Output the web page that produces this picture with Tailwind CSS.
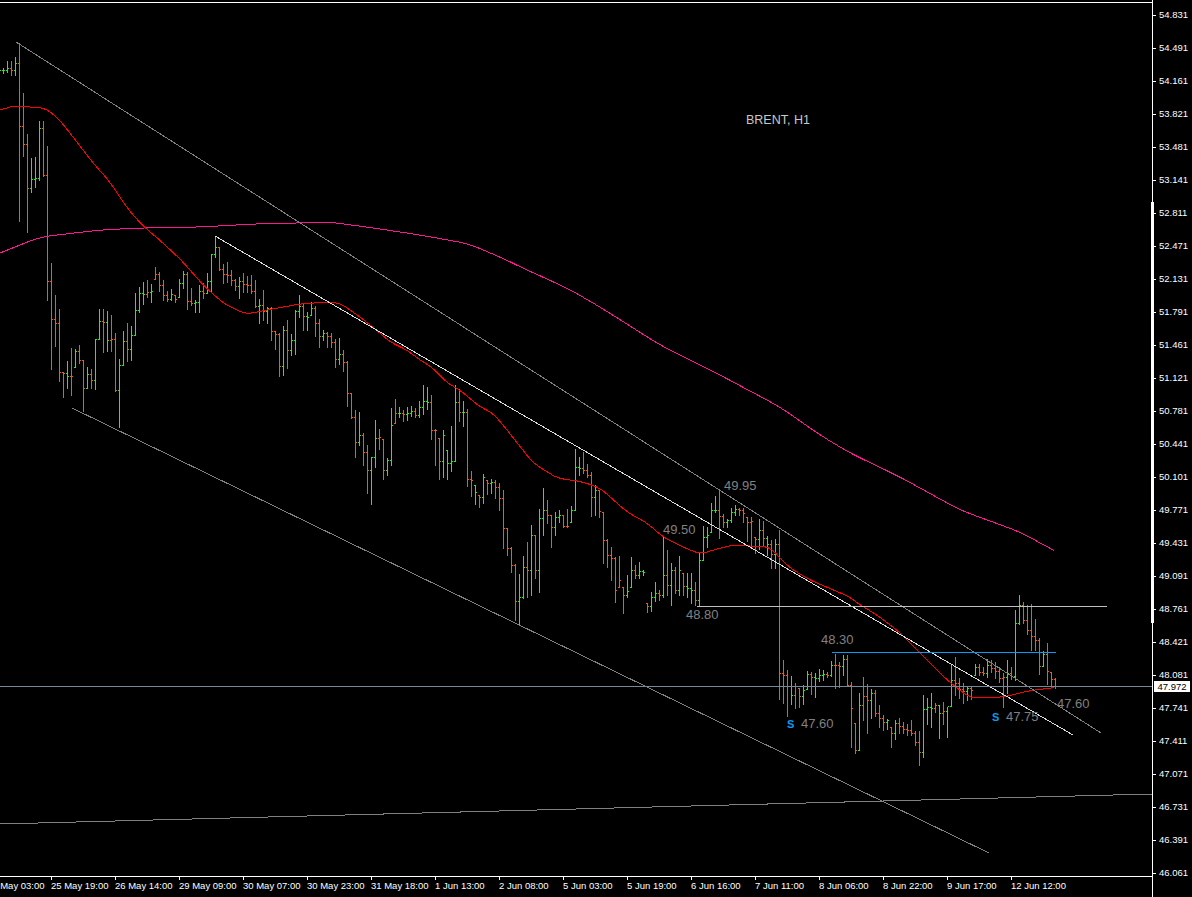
<!DOCTYPE html>
<html lang="en">

<head>
    <meta charset="UTF-8">
    <title>BRENT, H1</title>
    <script src="https://cdn.jsdelivr.net/npm/@tailwindcss/browser@4"></script>
</head>

<body class="bg-black">
    <div class="relative flex w-[1192px] h-[897px] overflow-hidden bg-black text-white font-['Liberation_Sans',sans-serif]">

        <!-- chart + time axis -->
        <div class="flex flex-col w-[1152px] pt-[2px]">
            <div class="relative w-[1152px] h-[875px] border-t border-b border-white">
                <svg id="chart" width="1152" height="873" viewBox="0 3 1152 873" class="block"></svg>

                <span class="absolute left-[746px] top-[110px] text-[12.5px] leading-[14px] text-[#c8c8c8]">BRENT, H1</span>
                <span class="absolute left-[724px] top-[475px] text-[13px] leading-[16px] text-[#808080]">49.95</span>
                <span class="absolute left-[663px] top-[519px] text-[13px] leading-[16px] text-[#808080]">49.50</span>
                <span class="absolute left-[686px] top-[604px] text-[13px] leading-[16px] text-[#808080]">48.80</span>
                <span class="absolute left-[821px] top-[629px] text-[13px] leading-[16px] text-[#808080]">48.30</span>
                <span class="absolute left-[787px] top-[713px] text-[11px] leading-[16px] font-bold text-[#0a9bf0]">S</span>
                <span class="absolute left-[801px] top-[713px] text-[13px] leading-[16px] text-[#808080]">47.60</span>
                <span class="absolute left-[992px] top-[706px] text-[11px] leading-[16px] font-bold text-[#0a9bf0]">S</span>
                <span class="absolute left-[1006px] top-[706px] text-[13px] leading-[16px] text-[#808080]">47.75</span>
                <span class="absolute left-[1057px] top-[693px] text-[13px] leading-[16px] text-[#808080]">47.60</span>
            </div>

            <div class="flex -ml-[13px] text-[9.5px] leading-[11px] whitespace-nowrap">
                <div class="w-[64px]"><div class="w-px h-[3px] bg-white"></div><span>25 May 03:00</span></div>
                <div class="w-[64px]"><div class="w-px h-[3px] bg-white"></div><span>25 May 19:00</span></div>
                <div class="w-[64px]"><div class="w-px h-[3px] bg-white"></div><span>26 May 14:00</span></div>
                <div class="w-[64px]"><div class="w-px h-[3px] bg-white"></div><span>29 May 09:00</span></div>
                <div class="w-[64px]"><div class="w-px h-[3px] bg-white"></div><span>30 May 07:00</span></div>
                <div class="w-[64px]"><div class="w-px h-[3px] bg-white"></div><span>30 May 23:00</span></div>
                <div class="w-[64px]"><div class="w-px h-[3px] bg-white"></div><span>31 May 18:00</span></div>
                <div class="w-[64px]"><div class="w-px h-[3px] bg-white"></div><span>1 Jun 13:00</span></div>
                <div class="w-[64px]"><div class="w-px h-[3px] bg-white"></div><span>2 Jun 08:00</span></div>
                <div class="w-[64px]"><div class="w-px h-[3px] bg-white"></div><span>5 Jun 03:00</span></div>
                <div class="w-[64px]"><div class="w-px h-[3px] bg-white"></div><span>5 Jun 19:00</span></div>
                <div class="w-[64px]"><div class="w-px h-[3px] bg-white"></div><span>6 Jun 16:00</span></div>
                <div class="w-[64px]"><div class="w-px h-[3px] bg-white"></div><span>7 Jun 11:00</span></div>
                <div class="w-[64px]"><div class="w-px h-[3px] bg-white"></div><span>8 Jun 06:00</span></div>
                <div class="w-[64px]"><div class="w-px h-[3px] bg-white"></div><span>8 Jun 22:00</span></div>
                <div class="w-[64px]"><div class="w-px h-[3px] bg-white"></div><span>9 Jun 17:00</span></div>
                <div class="w-[64px]"><div class="w-px h-[3px] bg-white"></div><span>12 Jun 12:00</span></div>
            </div>
        </div>

        <!-- price axis -->
        <div class="w-[40px] h-[897px] border-l border-white text-[9.5px]">
            <div class="flex flex-col -mt-px">
                <div class="flex items-center h-[33px] gap-[3px]"><div class="w-[3px] h-px bg-white"></div><span>54.831</span></div>
                <div class="flex items-center h-[33px] gap-[3px]"><div class="w-[3px] h-px bg-white"></div><span>54.491</span></div>
                <div class="flex items-center h-[33px] gap-[3px]"><div class="w-[3px] h-px bg-white"></div><span>54.161</span></div>
                <div class="flex items-center h-[33px] gap-[3px]"><div class="w-[3px] h-px bg-white"></div><span>53.821</span></div>
                <div class="flex items-center h-[33px] gap-[3px]"><div class="w-[3px] h-px bg-white"></div><span>53.481</span></div>
                <div class="flex items-center h-[33px] gap-[3px]"><div class="w-[3px] h-px bg-white"></div><span>53.141</span></div>
                <div class="flex items-center h-[33px] gap-[3px]"><div class="w-[3px] h-px bg-white"></div><span>52.811</span></div>
                <div class="flex items-center h-[33px] gap-[3px]"><div class="w-[3px] h-px bg-white"></div><span>52.471</span></div>
                <div class="flex items-center h-[33px] gap-[3px]"><div class="w-[3px] h-px bg-white"></div><span>52.131</span></div>
                <div class="flex items-center h-[33px] gap-[3px]"><div class="w-[3px] h-px bg-white"></div><span>51.791</span></div>
                <div class="flex items-center h-[33px] gap-[3px]"><div class="w-[3px] h-px bg-white"></div><span>51.461</span></div>
                <div class="flex items-center h-[33px] gap-[3px]"><div class="w-[3px] h-px bg-white"></div><span>51.121</span></div>
                <div class="flex items-center h-[33px] gap-[3px]"><div class="w-[3px] h-px bg-white"></div><span>50.781</span></div>
                <div class="flex items-center h-[33px] gap-[3px]"><div class="w-[3px] h-px bg-white"></div><span>50.441</span></div>
                <div class="flex items-center h-[33px] gap-[3px]"><div class="w-[3px] h-px bg-white"></div><span>50.101</span></div>
                <div class="flex items-center h-[33px] gap-[3px]"><div class="w-[3px] h-px bg-white"></div><span>49.771</span></div>
                <div class="flex items-center h-[33px] gap-[3px]"><div class="w-[3px] h-px bg-white"></div><span>49.431</span></div>
                <div class="flex items-center h-[33px] gap-[3px]"><div class="w-[3px] h-px bg-white"></div><span>49.091</span></div>
                <div class="flex items-center h-[33px] gap-[3px]"><div class="w-[3px] h-px bg-white"></div><span>48.761</span></div>
                <div class="flex items-center h-[33px] gap-[3px]"><div class="w-[3px] h-px bg-white"></div><span>48.421</span></div>
                <div class="flex items-center h-[33px] gap-[3px]"><div class="w-[3px] h-px bg-white"></div><span>48.081</span></div>
                <div class="flex items-center h-[33px] gap-[3px]"><div class="w-[3px] h-px bg-white"></div><span>47.741</span></div>
                <div class="flex items-center h-[33px] gap-[3px]"><div class="w-[3px] h-px bg-white"></div><span>47.411</span></div>
                <div class="flex items-center h-[33px] gap-[3px]"><div class="w-[3px] h-px bg-white"></div><span>47.071</span></div>
                <div class="flex items-center h-[33px] gap-[3px]"><div class="w-[3px] h-px bg-white"></div><span>46.731</span></div>
                <div class="flex items-center h-[33px] gap-[3px]"><div class="w-[3px] h-px bg-white"></div><span>46.391</span></div>
                <div class="flex items-center h-[33px] gap-[3px]"><div class="w-[3px] h-px bg-white"></div><span>46.061</span></div>
            </div>
        </div>

        <!-- scrollbar mark and current price tag sit over the axis -->
        <div class="absolute left-[1151px] top-[202px] w-[3px] h-[421px] bg-white"></div>
        <div class="absolute left-[1154px] top-[681px] w-[36px] h-[11px] bg-white text-black text-[9.5px] leading-[11px] text-center">47.972</div>
    </div>

    <script>
        // bars: [green?, high y, low y, close y] in chart pixels, one bar every 4px
        const G = 1, O = 0;
        const bars = [
            [G, 70, 72], [G, 68, 73], [G, 61, 72, 68], [O, 61, 75, 70], [G, 57, 75, 63], [O, 43, 221, 126], [O, 93, 156, 144], [O, 134, 232, 188],
            [G, 158, 192, 179], [G, 157, 187, 178], [G, 121, 180, 128], [O, 121, 176, 175], [O, 146, 300, 281], [O, 263, 369, 319], [O, 295, 346, 323], [O, 309, 381, 372],
            [O, 372, 397, 373], [G, 361, 388, 376], [O, 348, 395, 376], [G, 349, 367, 351], [O, 345, 363, 360], [O, 360, 411, 388], [G, 367, 388, 374], [O, 369, 388, 380],
            [G, 339, 389, 339], [G, 309, 339, 321], [O, 309, 352, 322], [G, 311, 351, 340], [O, 315, 351, 339], [O, 333, 391, 390], [G, 359, 427, 365], [G, 331, 365, 341],
            [O, 323, 361, 349], [G, 326, 360, 335], [G, 293, 335, 310], [G, 287, 312, 293], [G, 282, 304, 294], [O, 280, 297, 292], [G, 284, 302, 291], [O, 267, 279, 274],
            [O, 272, 291, 285], [O, 280, 300, 295], [O, 291, 301, 299], [G, 289, 300, 294], [O, 295, 302, 299], [G, 279, 297, 283], [G, 271, 288, 274], [O, 272, 309, 301],
            [O, 288, 305, 303], [G, 300, 312, 302], [G, 285, 312, 291], [O, 283, 298, 293], [G, 273, 293, 281], [G, 254, 292, 254], [G, 237, 257, 247], [O, 247, 270, 269],
            [O, 264, 283, 274], [O, 262, 282, 275], [O, 270, 285, 280], [O, 279, 290, 286], [G, 277, 298, 281], [O, 273, 292, 284], [O, 276, 292, 285], [O, 275, 293, 291],
            [O, 280, 307, 306], [G, 299, 323, 305], [O, 290, 320, 311], [G, 307, 323, 308], [O, 307, 340, 331], [O, 331, 349, 334], [O, 333, 376, 366], [G, 326, 375, 330],
            [O, 320, 368, 350], [G, 334, 355, 340], [G, 310, 354, 311], [G, 295, 317, 306],
            [O, 304, 330, 316], [G, 312, 330, 317], [G, 302, 315, 308], [O, 306, 336, 323], [O, 319, 347, 336], [G, 330, 340, 333], [O, 332, 347, 336], [O, 333, 347, 342],
            [O, 339, 367, 359], [G, 338, 364, 354], [O, 350, 371, 362], [O, 361, 406, 393], [O, 393, 418, 417], [O, 410, 457, 442], [G, 412, 445, 435], [O, 433, 465, 452],
            [O, 445, 493, 470], [G, 457, 504, 457], [G, 420, 467, 438], [O, 429, 449, 437], [O, 439, 479, 470], [G, 458, 475, 460], [G, 408, 465, 425], [O, 399, 423, 413],
            [G, 407, 417, 413], [O, 410, 421, 414], [G, 407, 420, 413], [G, 406, 416, 411], [O, 408, 417, 415], [G, 401, 417, 407], [G, 385, 414, 401], [G, 387, 409, 402],
            [O, 395, 439, 430], [O, 429, 465, 430], [O, 438, 479, 461], [G, 430, 477, 435], [G, 450, 479, 463], [G, 426, 471, 461], [G, 385, 461, 402], [O, 389, 421, 412],
            [G, 401, 426, 412], [O, 409, 486, 479], [O, 471, 496, 480], [G, 485, 504, 492], [O, 495, 507, 497], [G, 474, 503, 477], [O, 480, 494, 483], [G, 479, 493, 482],
            [O, 480, 498, 487], [O, 483, 510, 498], [O, 490, 548, 528], [O, 528, 555, 548], [O, 547, 572, 565], [O, 564, 620, 601], [G, 574, 625, 597], [G, 556, 598, 567],
            [O, 542, 597, 570], [G, 525, 595, 535], [O, 535, 578, 570], [G, 509, 592, 518], [G, 488, 535, 510], [O, 500, 523, 515], [O, 515, 547, 527], [G, 512, 535, 517],
            [G, 510, 522, 515], [O, 515, 527, 526], [O, 509, 527, 526], [G, 506, 522, 510], [G, 449, 510, 467], [G, 457, 475, 468], [O, 452, 473, 470], [O, 464, 477, 475],
            [O, 472, 516, 497], [G, 485, 515, 490], [O, 490, 517, 511], [O, 512, 563, 540], [O, 539, 567, 555], [O, 547, 580, 558], [O, 557, 602, 590], [O, 556, 587, 580],
            [O, 587, 613, 595], [G, 575, 597, 591], [G, 557, 587, 570], [O, 565, 578, 575], [G, 562, 578, 571], [G, 570, 575, 572], [O, 603, 612, 606], [G, 592, 611, 597],
            [G, 582, 601, 593], [O, 590, 600, 595], [G, 536, 597, 575], [O, 550, 595, 585], [G, 563, 605, 570], [O, 567, 593, 590], [G, 556, 595, 570], [O, 573, 595, 586],
            [G, 573, 597, 588], [G, 573, 603, 590], [O, 582, 605, 600], [G, 552, 605, 560], [G, 526, 560, 537], [G, 527, 547, 535], [G, 503, 532, 510], [G, 496, 512, 510],
            [O, 490, 538, 516], [O, 514, 527, 522], [G, 519, 527, 520], [G, 508, 522, 512], [G, 505, 515, 509], [O, 508, 515, 510], [O, 508, 522, 513], [O, 517, 541, 522],
            [O, 517, 545, 521], [O, 537, 553, 539], [G, 519, 549, 530], [O, 521, 545, 538], [G, 536, 555, 544], [O, 540, 568, 554], [G, 539, 568, 544], [O, 530, 699, 673],
            [O, 660, 703, 675], [O, 670, 716, 686], [G, 676, 704, 695], [O, 683, 708, 686], [O, 688, 707, 696], [G, 685, 704, 690], [G, 671, 689, 674], [O, 672, 694, 677],
            [G, 673, 697, 678], [G, 669, 681, 675], [G, 670, 680, 674], [O, 672, 677, 675], [G, 661, 676, 665], [O, 654, 688, 665], [O, 662, 687, 666], [G, 655, 675, 659],
            [O, 655, 686, 685], [O, 682, 747, 708], [O, 723, 753, 750], [G, 693, 750, 705], [O, 677, 720, 696], [O, 684, 733, 700], [G, 689, 718, 693], [O, 690, 716, 713],
            [O, 705, 727, 718], [O, 715, 730, 722], [G, 719, 729, 720], [O, 727, 747, 733], [G, 720, 739, 723], [O, 718, 733, 726], [O, 722, 733, 729], [O, 724, 735, 730],
            [O, 720, 735, 733], [O, 731, 745, 742], [O, 731, 765, 752], [G, 695, 757, 709], [G, 698, 724, 707], [G, 693, 727, 708], [O, 703, 712, 705], [G, 705, 738, 713],
            [O, 702, 724, 711], [G, 707, 737, 706], [G, 664, 706, 680], [O, 657, 695, 683], [O, 678, 698, 689], [O, 683, 703, 691], [G, 687, 700, 688], [O, 687, 699, 690],
            [G, 664, 675, 667], [O, 664, 675, 672], [O, 667, 675, 673], [G, 659, 677, 665], [O, 660, 672, 668], [O, 662, 678, 671], [O, 667, 682, 678], [O, 673, 707, 677],
            [G, 660, 693, 673], [O, 667, 679, 676], [G, 610, 680, 623], [G, 595, 624, 605], [O, 602, 623, 620], [O, 605, 634, 630], [O, 604, 650, 636], [O, 619, 650, 640],
            [O, 638, 674, 666], [G, 651, 666, 654], [O, 643, 684, 671], [O, 672, 687, 679], [O, 678, 688, 686]
        ];

        const ma50 = [0,110, 13,106, 25,106, 35,108, 43,107, 57,117, 70,133, 93,163, 110,182, 127,208, 142,225, 163,243, 183,262, 203,285, 223,303, 245,314, 257,312, 283,307, 300,304, 327,302, 340,303, 360,317, 380,333, 390,342, 407,350, 417,358, 433,368, 447,383, 460,390, 480,407, 493,413, 507,430, 533,463, 557,478, 583,482, 600,488, 627,512, 647,523, 663,537, 683,547, 700,554, 717,549, 733,545, 750,546, 770,547, 778,556, 790,568, 810,580, 850,597, 857,603, 877,615, 897,630, 917,650, 947,680, 970,698, 1003,697, 1033,690, 1053,688, 1055,686];
        const ma200 = [0,253, 40,237, 100,230, 140,228, 200,227, 253,224, 297,223, 330,222, 380,229, 420,235, 470,244, 483,250, 500,257, 527,270, 567,288, 600,307, 660,345, 720,375, 780,407, 820,435, 850,453, 900,477, 960,510, 1020,532, 1055,551];

        // resample every 2px and take a short average so the curves don't kink at the read-off points
        function smooth(p, win) {
            const ys = [];
            for (let x = p[0], k = 0; x <= p[p.length - 2]; x += 2) {
                while (p[k + 2] < x) k += 2;
                ys.push(p[k + 1] + (p[k + 3] - p[k + 1]) * (x - p[k]) / (p[k + 2] - p[k]));
            }
            return ys.map((_, i) => {
                const w = Math.min(win, i, ys.length - 1 - i);
                let sum = 0;
                for (let j = i - w; j <= i + w; j++) sum += ys[j];
                return `${p[0] + i * 2},${(sum / (2 * w + 1)).toFixed(1)}`;
            }).join(" ");
        }

        let green = "", orange = "";
        let prev = bars[0][1];
        bars.forEach((b, i) => {
            const x = 4 * i - 1;
            const open = Math.min(Math.max(prev, b[1]), b[2]);
            const d = `M${x + .5} ${b[1]}V${b[2] + 1}M${x - 1} ${open + .5}h1M${x + 1} ${b[3] === undefined ? open + .5 : b[3] + .5}h1`;
            if (b[0]) green += d; else orange += d;
            if (b[3] !== undefined) prev = b[3];
        });

        const line = (x1, y1, x2, y2, color) =>
            `<line x1="${x1}" y1="${y1}" x2="${x2}" y2="${y2}" stroke="${color}"/>`;

        document.getElementById("chart").innerHTML = `
            <g shape-rendering="crispEdges" fill="none" stroke-width="1">
                <path d="${orange}" stroke="#f4581c"/>
                <path d="${green}" stroke="#22f022"/>
                <polyline points="${smooth(ma200, 6)}" stroke="#ff1493"/>
                <polyline points="${smooth(ma50, 3)}" stroke="#ff0000"/>
                ${line(16, 42, 1101, 733, "#808080")}
                ${line(215, 236, 1073, 735, "#dcdcdc")}
                ${line(72, 408, 989, 853, "#808080")}
                ${line(0, 824, 1152, 794, "#808080")}
                ${line(697, 606.5, 1107, 606.5, "#c0c0c0")}
                ${line(832, 652.5, 1056, 652.5, "#0a9bf0")}
                ${line(0, 686.5, 1152, 686.5, "#778899")}
            </g>`;
    </script>
</body>

</html>
